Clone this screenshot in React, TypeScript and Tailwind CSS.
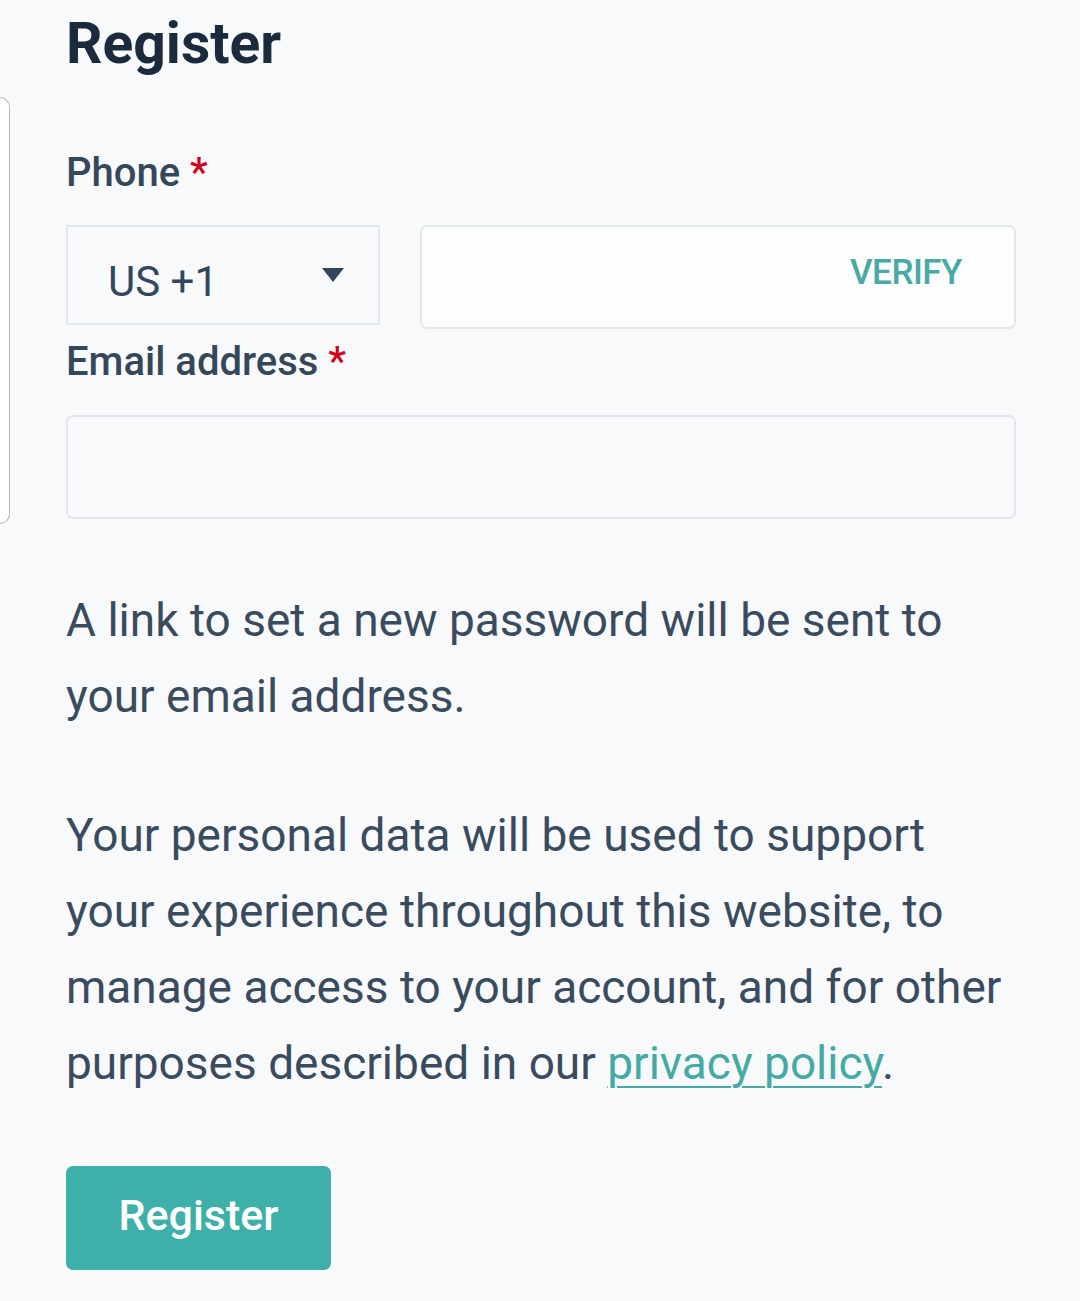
import { useState } from "react";

const App = () => {
  const [phone, setPhone] = useState("");
  const [email, setEmail] = useState("");

  return (
    <div
      className="min-h-screen bg-[#f8f9fb] flex"
      style={{ fontFamily: "Roboto, 'Liberation Sans', sans-serif" }}
    >
      {/* clipped side panel peeking in from the left */}
      <div className="flex-none w-[10px] h-[427px] mt-[97px] bg-white border border-l-0 border-[#b9b9b9] rounded-r-[10px]" />

      <div className="flex-1 min-w-0 pl-[56px] pt-[15px] pb-10">
        <div className="w-[950px]">
          {/* TITLE */}
          <h1 className="text-[57px] leading-none font-bold text-[#1b2a3d]">Register</h1>

          {/* PHONE */}
          <label className="block mt-[81px] text-[40px] leading-none font-medium text-[#364759]">
            Phone <span className="text-[#d0021b]">*</span>
          </label>

          <div className="flex items-start gap-[40px] mt-[32px]">
            <button className="flex-none w-[314px] h-[100px] border-2 border-[#e3e6ea] flex items-center justify-between pl-[40px] pr-[34px] text-[42px] text-[#34465a]">
              <span className="pt-[12px]">US +1</span>
              <svg width="22" height="14" viewBox="0 0 22 14">
                <path d="M0 0 L22 0 L11 14 Z" fill="#34465a" />
              </svg>
            </button>

            <div className="flex-1 min-w-0 h-[104px] bg-[#fcfdfd] border-2 border-[#e5e8eb] rounded-[7px] flex items-center pr-[52px]">
              <input
                value={phone}
                onChange={(e) => setPhone(e.target.value)}
                className="flex-1 w-0 min-w-0 h-full bg-transparent outline-none px-6 text-[40px]"
              />
              <span className="text-[35px] font-medium text-[#4aa9a3] tracking-[-0.5px] mt-[-8px]">
                VERIFY
              </span>
            </div>
          </div>

          {/* EMAIL */}
          <label className="block mt-[13px] text-[40px] leading-none font-medium text-[#364759]">
            Email address <span className="text-[#d0021b]">*</span>
          </label>

          <input
            value={email}
            onChange={(e) => setEmail(e.target.value)}
            className="block w-full mt-[33px] h-[104px] bg-[#f9f9fc] border-2 border-[#e3e6ea] rounded-[7px] outline-none px-6 text-[40px]"
          />

          {/* TEXT */}
          <p className="mt-[63px] text-[46px] leading-[76px] text-[#3a4b5e]">
            A link to set a new password will be sent to your email address.
          </p>

          <p className="mt-[63px] text-[46px] leading-[76px] text-[#3a4b5e]">
            Your personal data will be used to support your experience throughout this website, to
            manage access to your account, and for other purposes described in our{" "}
            <a
              href="#"
              className="text-[#46aaa4] underline decoration-2 underline-offset-[7px]"
            >
              privacy policy
            </a>
            .
          </p>

          {/* REGISTER BUTTON */}
          <button className="mt-[65px] w-[265px] h-[104px] pb-[5px] bg-[#3eafa9] rounded-[7px] text-white text-[43px] font-medium">
            Register
          </button>
        </div>
      </div>
    </div>
  );
};

export default App;
